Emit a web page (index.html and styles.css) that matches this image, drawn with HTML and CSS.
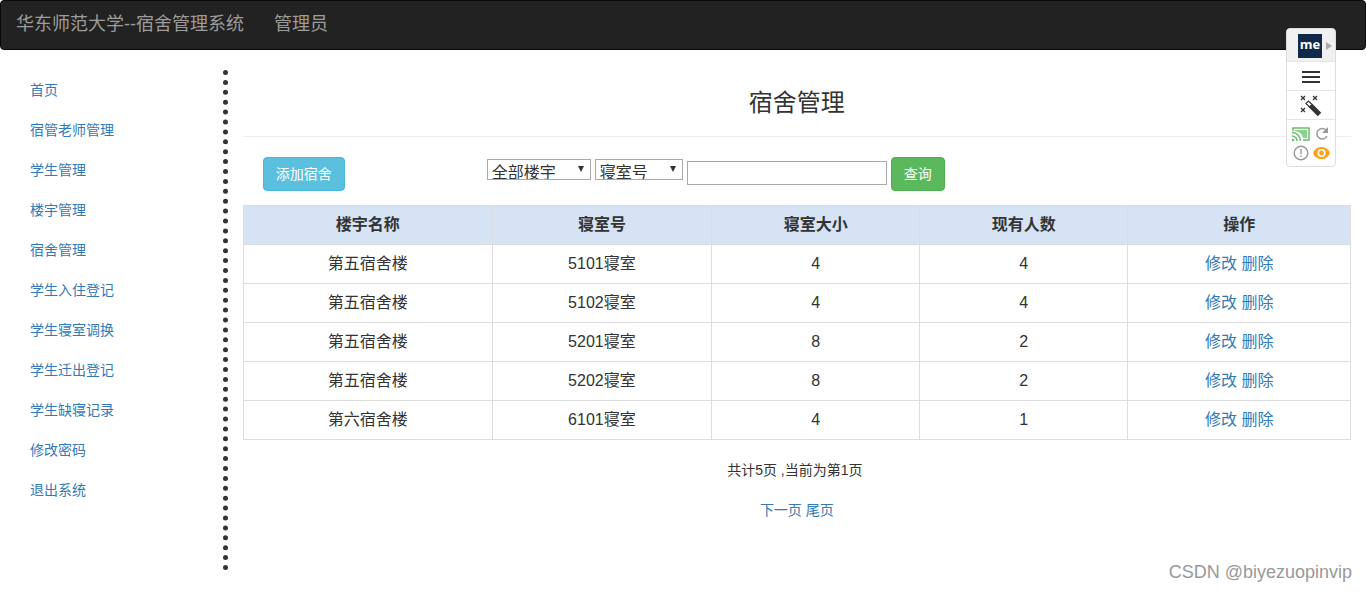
FILE: index.html
```html
<!DOCTYPE html>
<html lang="zh-CN">
<head>
<meta charset="utf-8">
<title>宿舍管理</title>
<link rel="stylesheet" href="styles.css">
</head>
<body>
<header class="navbar">
  <a class="brand" href="#">华东师范大学--宿舍管理系统</a>
  <a class="brand" href="#">管理员</a>
</header>
<div class="layout">
  <nav class="sidebar">
    <a href="#">首页</a>
    <a href="#">宿管老师管理</a>
    <a href="#">学生管理</a>
    <a href="#">楼宇管理</a>
    <a href="#">宿舍管理</a>
    <a href="#">学生入住登记</a>
    <a href="#">学生寝室调换</a>
    <a href="#">学生迁出登记</a>
    <a href="#">学生缺寝记录</a>
    <a href="#">修改密码</a>
    <a href="#">退出系统</a>
    <svg class="dots" aria-hidden="true"><line x1="2.500" y1="2.500" x2="2.500" y2="498" stroke="#333" stroke-width="5" stroke-linecap="round" stroke-dasharray="0 9.900"/></svg>
  </nav>
  <main class="content">
    <h3 class="title">宿舍管理</h3>
    <form class="toolbar">
      <button class="btn btn-info" type="button">添加宿舍</button>
      <div class="search">
        <select class="building" aria-label="楼宇"><option>全部楼宇</option></select>
        <select class="field" aria-label="查询字段"><option>寝室号</option></select>
        <input class="keyword" type="text" aria-label="关键字">
        <button class="btn btn-success" type="button">查询</button>
      </div>
    </form>
    <table class="rooms">
      <colgroup><col class="c-name"><col class="c-room"><col class="c-size"><col class="c-count"><col class="c-action"></colgroup>
      <thead>
        <tr><th>楼宇名称</th><th>寝室号</th><th>寝室大小</th><th>现有人数</th><th>操作</th></tr>
      </thead>
      <tbody>
        <tr><td>第五宿舍楼</td><td>5101寝室</td><td>4</td><td>4</td><td><a href="#">修改</a> <a href="#">删除</a></td></tr>
        <tr><td>第五宿舍楼</td><td>5102寝室</td><td>4</td><td>4</td><td><a href="#">修改</a> <a href="#">删除</a></td></tr>
        <tr><td>第五宿舍楼</td><td>5201寝室</td><td>8</td><td>2</td><td><a href="#">修改</a> <a href="#">删除</a></td></tr>
        <tr><td>第五宿舍楼</td><td>5202寝室</td><td>8</td><td>2</td><td><a href="#">修改</a> <a href="#">删除</a></td></tr>
        <tr><td>第六宿舍楼</td><td>6101寝室</td><td>4</td><td>1</td><td><a href="#">修改</a> <a href="#">删除</a></td></tr>
      </tbody>
    </table>
    <p class="summary">共计5页 ,当前为第1页</p>
    <p class="pager"><a href="#">下一页</a> <a href="#">尾页</a></p>
  </main>
</div>
<aside class="widget">
  <div class="widget-head">
    <span class="me">me</span>
    <svg width="6" height="8" viewBox="0 0 6 8"><path d="M0 0l6 4-6 4z" fill="#aaa"/></svg>
  </div>
  <div class="widget-row">
    <svg width="18" height="12" viewBox="0 0 18 12"><path d="M0 1h18M0 6h18M0 11h18" stroke="#333" stroke-width="2"/></svg>
  </div>
  <div class="widget-row">
    <svg width="22" height="22" viewBox="0 0 22 22" fill="none">
      <path d="M1 1l4 4M5 1l-4 4M13 1l4 4M17 1l-4 4M1 13l4 4M5 13l-4 4" stroke="#333" stroke-width="1.300"/>
      <path d="M10 10l9.500 9.500" stroke="#333" stroke-width="5"/>
      <path d="M6 8.500L8.500 6l3.500 3.500L9.500 12z" fill="#fff" stroke="#333" stroke-width="1.200"/>
    </svg>
  </div>
  <div class="widget-grid">
    <svg width="18" height="14" viewBox="0 0 18 14" fill="none">
      <path d="M1 4V1h16v12h-6" stroke="#68bd6c" stroke-width="1.500"/>
      <path d="M3 3h12v8h-4A9 9 0 0 0 3 4z" fill="#8bd38e"/>
      <path d="M0 5.500a8.500 8.500 0 0 1 8.500 8.500M0 9a5 5 0 0 1 5 5" stroke="#68bd6c" stroke-width="1.500"/>
      <path d="M0 11.500a2.500 2.500 0 0 1 2.500 2.500H0z" fill="#68bd6c"/>
    </svg>
    <svg width="14" height="14" viewBox="0 0 14 14" fill="none">
      <path d="M11 3A5.300 5.300 0 1 0 12 9" stroke="#999" stroke-width="1.500"/><path d="M13 0v6H7z" fill="#999"/>
    </svg>
    <svg width="16" height="16" viewBox="0 0 16 16" fill="none" stroke="#999" stroke-width="1.400">
      <circle cx="8" cy="8" r="6.800"/><path d="M8 4v5M8 10.500v1.500"/>
    </svg>
    <svg width="17" height="12" viewBox="0 0 17 12">
      <path d="M0 6C3-2 14-2 17 6C14 14 3 14 0 6z" fill="#ffa113"/><circle cx="8.500" cy="6" r="3.200" fill="#ffa113" stroke="#fff" stroke-width="1.600"/>
    </svg>
  </div>
</aside>
<div class="watermark">CSDN @biyezuopinvip</div>
</body>
</html>
```
FILE: styles.css
```css
* { box-sizing: border-box; }
body {
  margin: 0;
  background: #fff;
  color: #333;
  font: 14px/20px "Liberation Sans", "Noto Sans CJK SC", sans-serif;
}
a { color: #337ab7; text-decoration: none; }
.navbar {
  display: flex;
  gap: 30px;
  min-height: 50px;
  margin-bottom: 20px;
  padding: 13px 15px;
  background: #222;
  border: 1px solid #080808;
  border-radius: 4px;
}
.brand { color: #9d9d9d; font-size: 18px; }
.layout { display: flex; }
.sidebar {
  position: relative;
  display: flex;
  flex-direction: column;
  flex: 0 0 16.667%;
  min-height: 500px;
  padding: 0 15px;
}
.sidebar a { padding: 10px 15px; }
.dots {
  position: absolute;
  top: 0;
  right: 0;
  width: 5px;
  height: 100%;
}
.content { flex: 1; min-width: 0; padding: 0 15px; }
.title {
  margin: 0 0 20px;
  padding: 20px 0;
  border-bottom: 1px solid #eee;
  font-size: 24px;
  font-weight: 400;
  line-height: 26px;
  text-align: center;
}
.toolbar {
  display: flex;
  margin-bottom: 14px;
  padding-left: 20px;
}
.search {
  display: flex;
  align-items: center;
  gap: 4px;
  margin-left: 142px;
}
.btn {
  padding: 6px 12px;
  border: 1px solid;
  border-radius: 4px;
  color: #fff;
  font: inherit;
}
.btn-info { background: #5bc0de; border-color: #46b8da; }
.btn-success { background: #5cb85c; border-color: #4cae4c; }
select {
  height: 21px;
  margin-bottom: 9px;
  padding: 2px 4px 0;
  appearance: none;
  border: 1px solid #a9a9a9;
  border-radius: 0;
  background: #fff url("data:image/svg+xml,%3Csvg xmlns='http://www.w3.org/2000/svg' width='6' height='6'%3E%3Cpath d='M0 0h6L3 6z' fill='%23333'/%3E%3C/svg%3E") no-repeat right 6px top 6px;
  color: #333;
  font: 16px/22px "Liberation Sans", "Noto Sans CJK SC", sans-serif;
}
.building { width: 104px; }
.field { width: 88px; }
.keyword {
  width: 200px;
  height: 24px;
  margin-bottom: 2px;
  border: 1px solid #a9a9a9;
  font: inherit;
}
.rooms {
  width: 100%;
  margin-bottom: 20px;
  table-layout: fixed;
  border-collapse: collapse;
  font-size: 16px;
  line-height: 22px;
  text-align: center;
}
.rooms th, .rooms td { padding: 8px; border: 1px solid #ddd; }
.rooms th { background: #d5e3f4; }
.c-name { width: 22.5%; }
.c-room { width: 19.8%; }
.c-size, .c-count { width: 18.8%; }
.c-action { width: 20.1%; }
.summary, .pager { margin: 0 0 20px; text-align: center; }
.summary { padding-right: 4px; }
.widget {
  position: absolute;
  top: 28px;
  right: 30px;
  width: 50px;
  border: 1px solid #ddd;
  border-radius: 4px;
  background: #fff;
}
.widget-head, .widget-row {
  display: flex;
  align-items: center;
  justify-content: center;
  height: 29px;
  padding-top: 2px;
  border-bottom: 1px solid #e5e5e5;
}
.widget-head {
  gap: 4px;
  height: 33px;
  padding-left: 8px;
  border-radius: 4px 4px 0 0;
  background: #f0f0f0;
}
.me {
  width: 24px;
  height: 24px;
  background: #10294a;
  color: #fff;
  font: 700 13px/21px "Open Sans", sans-serif;
  text-align: center;
}
.widget-grid {
  display: grid;
  grid-template-columns: 18px 18px;
  grid-auto-rows: 16px;
  gap: 3px;
  place-content: center;
  place-items: center;
  height: 46px;
}
.watermark {
  position: absolute;
  right: 14px;
  bottom: 9px;
  color: #999;
  font: 18px/20px "Liberation Sans", sans-serif;
}
```
